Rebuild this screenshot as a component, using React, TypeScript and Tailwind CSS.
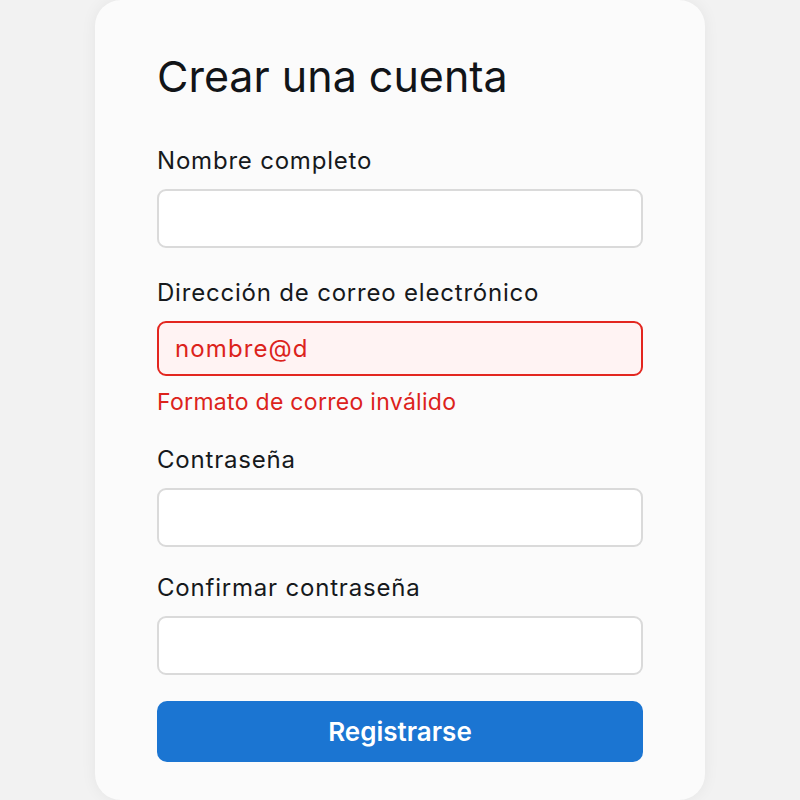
import React from "react";

const font = { fontFamily: "Inter, 'Noto Sans', sans-serif" };

function Field({ label, children }: { label: string; children: React.ReactNode }) {
  return (
    <div className="flex flex-col">
      <label className="text-[24px] leading-[28px] tracking-[0.8px] text-[#16191c] mb-[14px]">{label}</label>
      {children}
    </div>
  );
}

export default function App() {
  return (
    <div className="w-[800px] h-[800px] bg-[#f2f2f2] flex justify-center overflow-hidden" style={font}>
      <div className="w-[610px] h-[800px] bg-[#fbfbfb] rounded-[26px] shadow-[0_0_16px_rgba(0,0,0,0.06)] px-[62px] pt-[52px] flex flex-col">
        <h1 className="text-[43px] leading-[48px] text-[#111418] font-normal mb-[47px]">Crear una cuenta</h1>
        <Field label="Nombre completo">
          <div className="h-[59px] rounded-[9px] border-2 border-[#dadada] bg-white" />
        </Field>
        <div className="h-[31px]" />
        <Field label="Dirección de correo electrónico">
          <div className="h-[55px] rounded-[9px] border-2 border-[#e3261f] bg-[#fff3f3] flex items-center px-[16px] text-[24px] tracking-[1.1px] text-[#dc231c]">
            nombre@d
          </div>
        </Field>
        <div className="text-[23px] leading-[28px] tracking-[0.3px] text-[#dc231c] mt-[12px]">Formato de correo inválido</div>
        <div className="h-[30px]" />
        <Field label="Contraseña">
          <div className="h-[59px] rounded-[9px] border-2 border-[#dadada] bg-white" />
        </Field>
        <div className="h-[27px]" />
        <Field label="Confirmar contraseña">
          <div className="h-[59px] rounded-[9px] border-2 border-[#dadada] bg-white" />
        </Field>
        <button className="mt-[26px] h-[61px] rounded-[10px] bg-[#1b75d2] text-white text-[26px] font-semibold">
          Registrarse
        </button>
      </div>
    </div>
  );
}
